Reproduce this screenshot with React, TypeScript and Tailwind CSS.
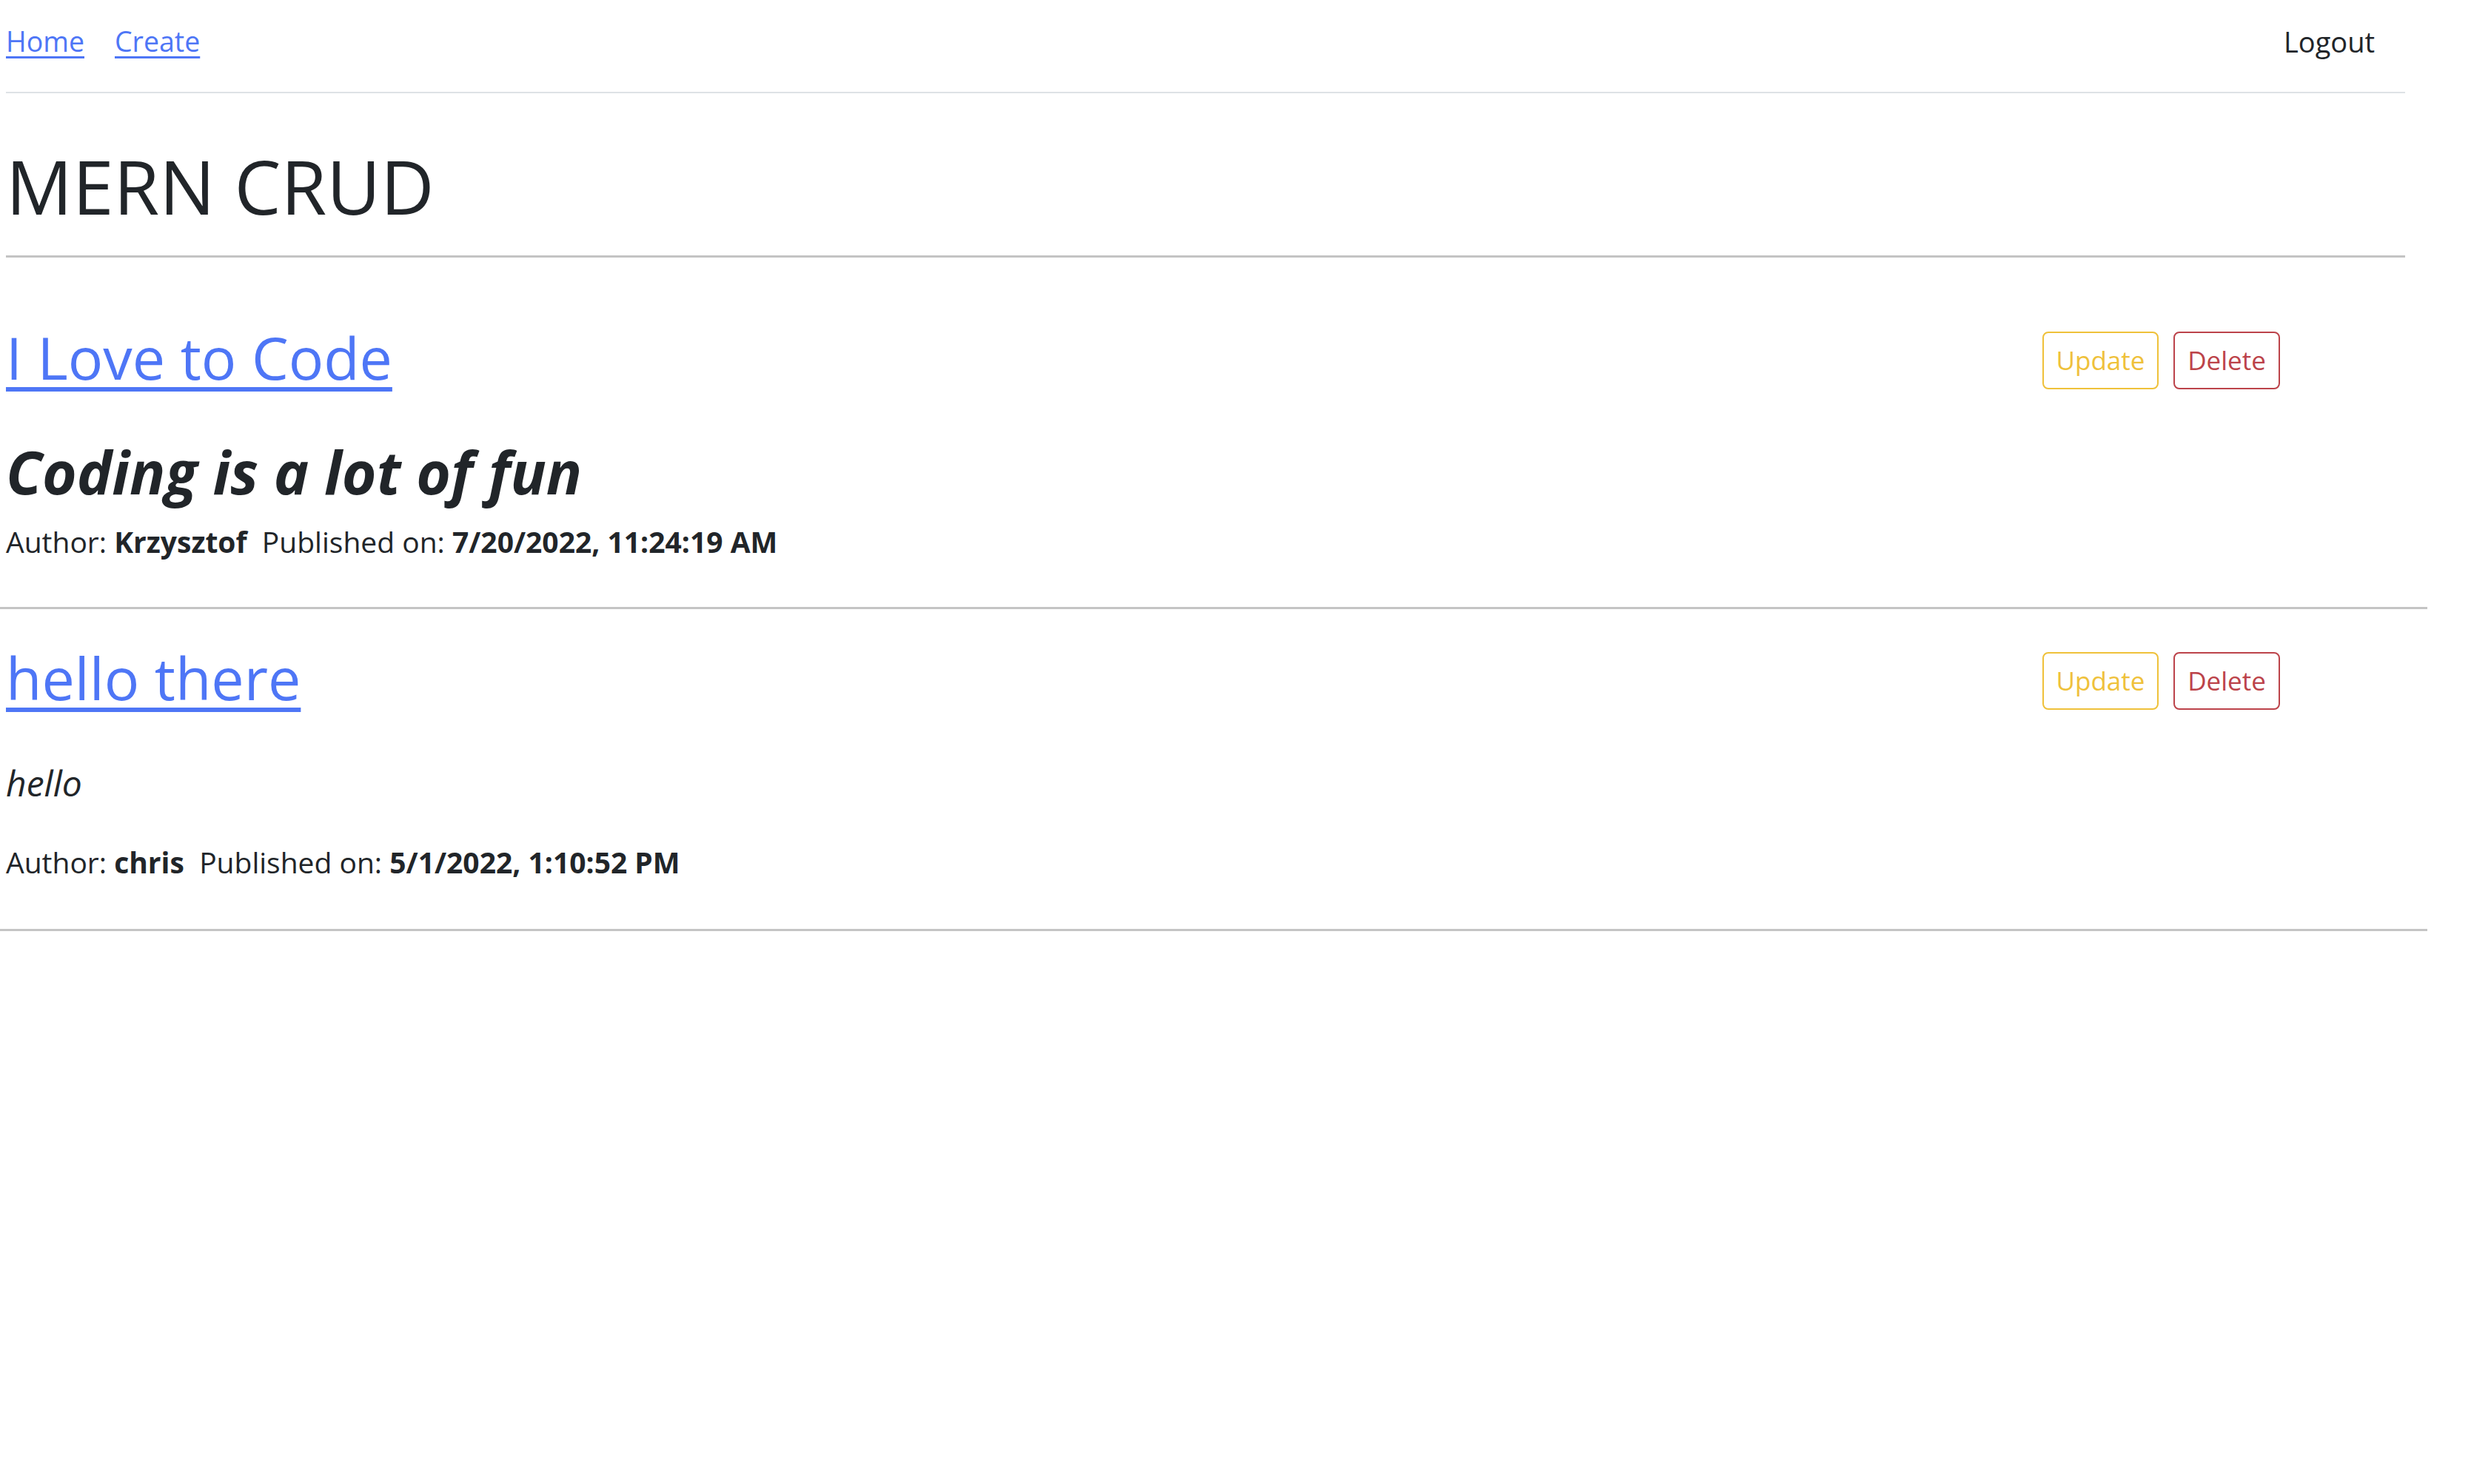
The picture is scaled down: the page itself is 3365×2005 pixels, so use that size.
import React from "react";

type Post = {
  title: string;
  desc: React.ReactNode;
  author: string;
  date: string;
  pt: string;
  descBox: string;
  authorMt: string;
  pb: string;
};

function PostItem({ p }: { p: Post }) {
  return (
    <div className={`w-[3279px] border-b-[3px] border-[#c4c4c4] pl-[8px] pr-[199px] ${p.pt} ${p.pb}`}>
      <div className="flex h-[96px] items-start justify-between">
        <a
          href="#"
          className="text-[79px] leading-[96px] text-[#4e76f6] underline decoration-[6px] underline-offset-[10px]"
        >
          {p.title}
        </a>
        <div className="mt-[13px] flex gap-[20px]">
          <button className="h-[78px] w-[157px] rounded-[8px] border-2 border-[#efc13a] text-[35px] leading-[52px] text-[#efc13a]">
            Update
          </button>
          <button className="h-[78px] w-[144px] rounded-[8px] border-2 border-[#bc434a] text-[35px] leading-[52px] text-[#bc434a]">
            Delete
          </button>
        </div>
      </div>
      <div className={p.descBox}>{p.desc}</div>
      <div className={`${p.authorMt} text-[39px] leading-[60px]`}>
        Author: <b className="font-bold">{p.author}</b>
        {"\u00a0 "}Published on: <b className="font-bold">{p.date}</b>
      </div>
    </div>
  );
}

export default function App() {
  const posts: Post[] = [
    {
      title: "I Love to Code",
      desc: (
        <h2 className="text-[80px] font-bold italic leading-[96px]">Coding is a lot of fun</h2>
      ),
      author: "Krzysztof",
      date: "7/20/2022, 11:24:19 AM",
      pt: "pt-[87px]",
      descBox: "mt-[58px]",
      authorMt: "mt-[17px]",
      pb: "pb-[58px]",
    },
    {
      title: "hello there",
      desc: <p className="text-[48px] italic leading-[72px]">hello</p>,
      author: "chris",
      date: "5/1/2022, 1:10:52 PM",
      pt: "pt-[45px]",
      descBox: "mt-[58px]",
      authorMt: "mt-[41px]",
      pb: "pb-[60px]",
    },
  ];

  return (
    <div className="min-h-screen bg-white font-['Open_Sans','Noto_Sans',sans-serif] text-[#212529]">
      <div className="ml-[8px] w-[3241px]">
        <nav className="flex h-[126px] items-start justify-between border-b-2 border-[#dee2e6] pt-[26px]">
          <div className="flex gap-[41px] text-[37.5px] leading-[60px]">
            <a href="#" className="text-[#4e76f6] underline decoration-[3px] underline-offset-[6px]">
              Home
            </a>
            <a href="#" className="text-[#4e76f6] underline decoration-[3px] underline-offset-[6px]">
              Create
            </a>
          </div>
          <button className="mr-[41px] text-[38px] leading-[60px] text-[#212529]">Logout</button>
        </nav>
        <h1 className="mt-[65px] text-[100px] font-normal leading-[120px]">MERN CRUD</h1>
        <div className="mt-[34px] h-[3px] bg-[#c4c4c4]" />
      </div>
      {posts.map((p) => (
        <PostItem key={p.title} p={p} />
      ))}
    </div>
  );
}
